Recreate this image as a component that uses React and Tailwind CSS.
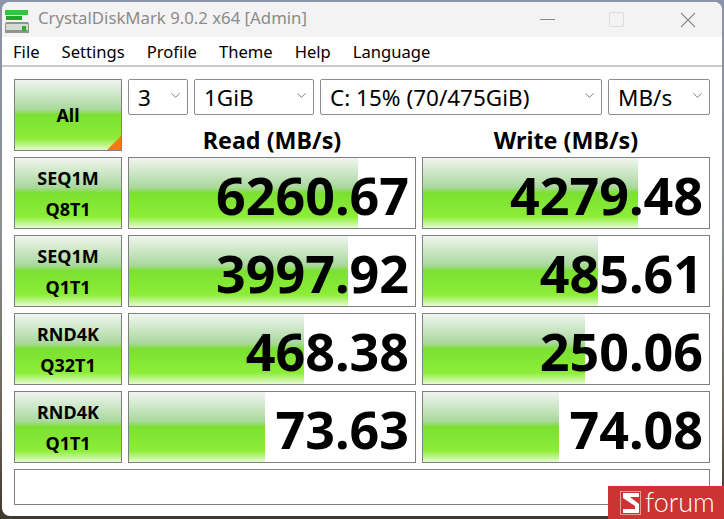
import React from 'react';
import { ChevronDown } from 'lucide-react';

const font = { fontFamily: '"Noto Sans", "Open Sans", sans-serif' };

const rows = [
    { top: 'SEQ1M', bottom: 'Q8T1', read: '6260.67', readBar: 229, write: '4279.48', writeBar: 215 },
    { top: 'SEQ1M', bottom: 'Q1T1', read: '3997.92', readBar: 219, write: '485.61', writeBar: 175 },
    { top: 'RND4K', bottom: 'Q32T1', read: '468.38', readBar: 175, write: '250.06', writeBar: 162 },
    { top: 'RND4K', bottom: 'Q1T1', read: '73.63', readBar: 136, write: '74.08', writeBar: 136 },
];

const menus = ['File', 'Settings', 'Profile', 'Theme', 'Help', 'Language'];

const greenGradient = 'bg-[linear-gradient(to_bottom,#f0f5f0_0%,#a9d89c_42%,#7be030_50%,#8cee38_84%,#e6fad2_100%)]';

const Combo = ({ value, width }) => (
    <div className={`${width} h-9 flex items-center justify-between border border-[#8c8c8c] rounded-[2px] bg-white pl-[9px] pr-[4px] text-[22.5px] text-black`}>
        <span className="pt-[2px]">{value}</span>
        <ChevronDown size={15} strokeWidth={1.2} className="text-[#555] -mt-[3px]" />
    </div>
);

const Result = ({ value, bar }) => (
    <div className="relative h-[72px] w-[288px] border border-[#808080] bg-white overflow-hidden">
        <div className={`absolute left-0 top-0 bottom-0 ${greenGradient}`} style={{ width: bar }} />
        <div className="relative h-full flex items-center justify-end pr-[6px] pt-[3px] text-[52px] font-bold text-black leading-none">
            {value}
        </div>
    </div>
);

const App = () => {
    return (
        <div className="relative w-[724px] h-[519px] overflow-hidden bg-[linear-gradient(to_bottom,#8d93a8_0%,#8a8f8f_45%,#6d6455_80%,#3f382e_100%)]" style={font}>
            <div className="ml-[2px] mt-[2px] w-[720px] h-[514px] rounded-lg overflow-hidden bg-white flex flex-col">
                {/* title bar */}
                <div className="relative h-[35px] bg-[#f3f3f3] flex items-center shrink-0">
                    <svg width="26" height="26" viewBox="0 0 26 26" className="ml-[2px]">
                        <rect x="1" y="15" width="24" height="12" rx="2" fill="#8c978c" />
                        <rect x="2" y="17" width="22" height="6" fill="#d4dbd4" />
                        <rect x="18" y="19" width="4" height="5" fill="#2fae32" />
                        <rect x="1" y="3" width="23" height="5" fill="#35c43a" />
                        <rect x="2" y="9" width="16" height="4" fill="#1fa82a" />
                    </svg>
                    <span className="ml-[8px] -mt-[3px] text-[16.75px] text-[#8b8b8b]">CrystalDiskMark 9.0.2 x64 [Admin]</span>
                    <div className="ml-auto flex items-center text-[#8a8a8a]">
                        <svg width="15" height="15" viewBox="0 0 15 15"><path d="M0 7.5h15" stroke="currentColor" strokeWidth="1" /></svg>
                        <div className="ml-[54px] w-[15px] h-[15px] border border-[#dcdcdc] rounded-[2px]" />
                        <svg width="16" height="16" viewBox="0 0 16 16" className="ml-[56px] mr-[26px]">
                            <path d="M1 1l14 14M15 1l-14 14" stroke="currentColor" strokeWidth="1.1" fill="none" />
                        </svg>
                    </div>
                </div>
                {/* menu bar */}
                <div className="h-[28px] flex items-center gap-[22px] pl-[11px] pt-[3px] text-[16.6px] text-black shrink-0">
                    {menus.map((m) => <span key={m}>{m}</span>)}
                </div>
                <div className="h-[2px] bg-[#c9c9c9] shrink-0" />
                {/* body */}
                <div className="flex-1 pl-[12px] pt-[12px] flex flex-col gap-[6px]">
                    <div className="flex gap-[6px]">
                        <div className={`relative w-[108px] h-[72px] border border-[#808080] flex items-center justify-center font-bold text-[18px] text-black ${greenGradient}`}>
                            All
                            <div className="absolute right-0 bottom-0 w-[14px] h-[14px] bg-[#f07c10] [clip-path:polygon(100%_0,100%_100%,0_100%)]" />
                        </div>
                        <div className="flex flex-col h-[72px]">
                            <div className="flex gap-[6px]">
                                <Combo value="3" width="w-[60px]" />
                                <Combo value="1GiB" width="w-[120px]" />
                                <Combo value="C: 15% (70/475GiB)" width="w-[282px]" />
                                <Combo value="MB/s" width="w-[102px]" />
                            </div>
                            <div className="flex gap-[6px] mt-[14px] text-[23.3px] font-bold text-black leading-[22px]">
                                <div className="w-[288px] text-center">Read (MB/s)</div>
                                <div className="w-[288px] text-center">Write (MB/s)</div>
                            </div>
                        </div>
                    </div>
                    {rows.map((r, i) => (
                        <div key={i} className="flex gap-[6px]">
                            <div className={`w-[108px] h-[72px] border border-[#808080] flex flex-col items-center justify-center gap-[7px] font-bold text-[18px] leading-[24px] text-black ${greenGradient}`}>
                                <span>{r.top}</span>
                                <span>{r.bottom}</span>
                            </div>
                            <Result value={r.read} bar={r.readBar} />
                            <Result value={r.write} bar={r.writeBar} />
                        </div>
                    ))}
                    <div className="w-[696px] h-[36px] border border-[#808080] bg-white" />
                </div>
            </div>
            {/* watermark */}
            <div className="absolute right-0 bottom-0 w-[116px] h-[33px] bg-[#cc3333] flex items-center pl-[12px] text-white">
                <div className="w-[21px] h-[24px] border border-[#e69a9a] flex items-center justify-center">
                    <svg width="17" height="20" viewBox="0 0 17 20">
                        <path d="M1 0h16v4H8l9 7v9H1v-4h12v-3L1 5z" fill="#fff" />
                    </svg>
                </div>
                <span className="ml-[4px] text-[27px] font-light leading-none -mt-[2px]" style={{ fontFamily: 'Lato, sans-serif' }}>forum</span>
            </div>
        </div>
    );
};

export default App;
